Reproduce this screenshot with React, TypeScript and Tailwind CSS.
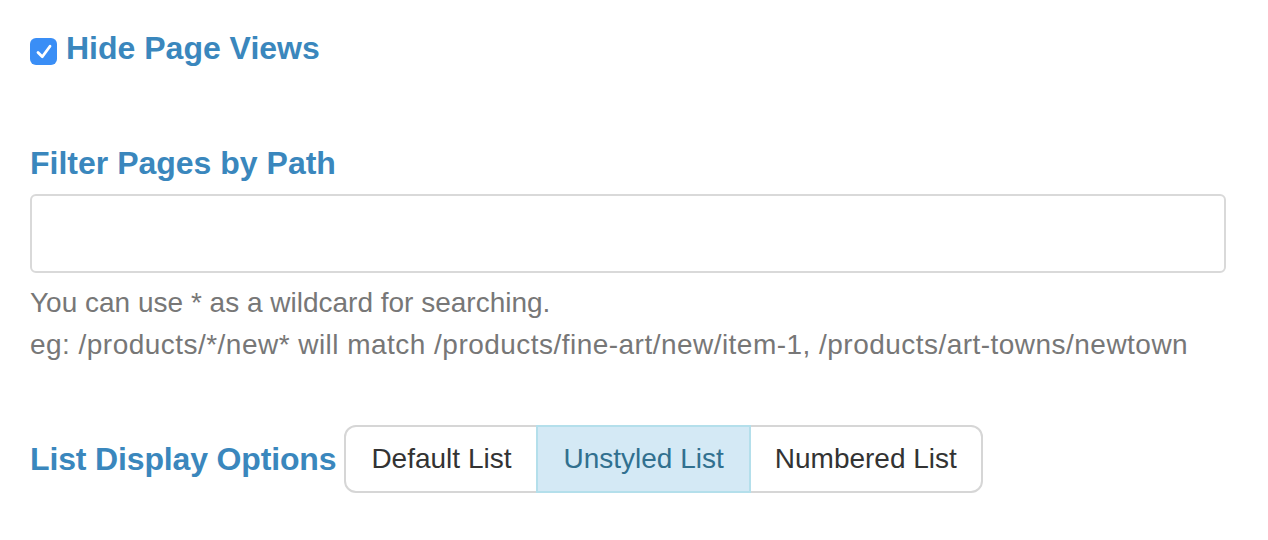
import React from "react";

export default function App() {
  const font = { fontFamily: '"Liberation Sans", Arial, Helvetica, sans-serif' };
  return (
    <div className="min-h-[540px] w-full bg-white pl-[30px] pt-[32px]" style={font}>
      <div className="w-[1196px]">
        <div className="flex items-start gap-[9px]">
          <div className="mt-[6px] h-[27px] w-[27px] rounded-[6px] bg-[#3a8ef6]">
            <svg width="27" height="27" viewBox="0 0 27 27" fill="none">
              <path d="M8 14.5 L12.3 18.8 L20 8.2" stroke="white" strokeWidth="2.8" strokeLinecap="round" strokeLinejoin="round" />
            </svg>
          </div>
          <span className="text-[32px] font-bold leading-[32px] text-[#3a87bd]">Hide Page Views</span>
        </div>

        <div className="mt-[82px] text-[32px] font-bold leading-[32px] text-[#3a87bd]">Filter Pages by Path</div>
        <div className="mt-[15px] h-[79px] w-full rounded-[6px] border-2 border-[#d9d9d9] bg-white" />
        <div className="mt-[9px] text-[28px] leading-[42px] text-[#777777]">
          <div>You can use * as a wildcard for searching.</div>
          <div className="tracking-[0.47px]">eg: /products/*/new* will match /products/fine-art/new/item-1, /products/art-towns/newtown</div>
        </div>

        <div className="mt-[59px] flex items-center gap-[8px]">
          <span className="text-[32px] font-bold leading-[32px] tracking-[-0.15px] text-[#3a87bd]">List Display Options</span>
          <div className="flex">
            <button className="relative h-[68px] rounded-l-[12px] border-2 border-[#d6d6d6] bg-white px-[25px] text-[28px] leading-[40px] text-[#333333]">
              Default List
            </button>
            <button className="relative z-10 -ml-[2px] h-[68px] border-2 border-[#b4dfeb] bg-[#d4e9f5] px-[25px] text-[28px] leading-[40px] text-[#31708f]">
              Unstyled List
            </button>
            <button className="relative -ml-[2px] h-[68px] rounded-r-[12px] border-2 border-[#d6d6d6] bg-white px-[24px] text-[28px] leading-[40px] text-[#333333]">
              Numbered List
            </button>
          </div>
        </div>
      </div>
    </div>
  );
}
